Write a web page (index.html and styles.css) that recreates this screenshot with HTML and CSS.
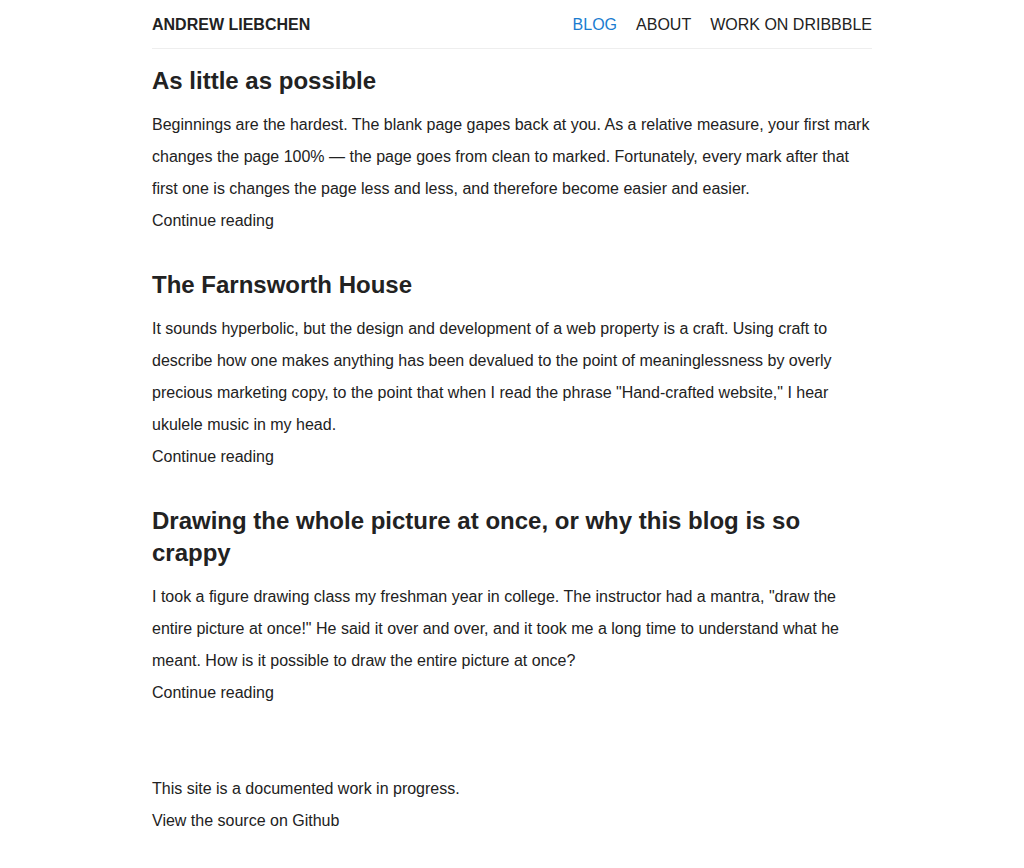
FILE: index.html
```html
<!DOCTYPE html>
<html lang="en">
<head>
<meta charset="utf-8">
<title>Andrew Liebchen</title>
<link rel="stylesheet" href="styles.css">
</head>
<body>
<div class="wrap">
  <header class="site-header">
    <a class="site-title" href="#">ANDREW LIEBCHEN</a>
    <nav class="nav">
      <a class="nav-link active" href="#">BLOG</a>
      <a class="nav-link" href="#">ABOUT</a>
      <a class="nav-link" href="#">WORK ON DRIBBBLE</a>
    </nav>
  </header>
  <main class="posts">
    <article class="post">
      <h1 class="post-title">As little as possible</h1>
      <p class="post-excerpt">Beginnings are the hardest. The blank page gapes back at you. As a relative measure, your first mark changes the page 100% — the page goes from clean to marked. Fortunately, every mark after that first one is changes the page less and less, and therefore become easier and easier.</p>
      <a class="more" href="#">Continue reading</a>
    </article>
    <article class="post">
      <h1 class="post-title">The Farnsworth House</h1>
      <p class="post-excerpt">It sounds hyperbolic, but the design and development of a web property is a craft. Using craft to describe how one makes anything has been devalued to the point of meaninglessness by overly precious marketing copy, to the point that when I read the phrase "Hand-crafted website," I hear ukulele music in my head.</p>
      <a class="more" href="#">Continue reading</a>
    </article>
    <article class="post">
      <h1 class="post-title">Drawing the whole picture at once, or why this blog is so crappy</h1>
      <p class="post-excerpt">I took a figure drawing class my freshman year in college. The instructor had a mantra, "draw the entire picture at once!" He said it over and over, and it took me a long time to understand what he meant. How is it possible to draw the entire picture at once?</p>
      <a class="more" href="#">Continue reading</a>
    </article>
  </main>
  <footer class="site-footer">
    <p class="foot-line">This site is a documented work in progress.</p>
    <p class="foot-line"><a class="foot-link" href="#">View the source on Github</a></p>
  </footer>
</div>
</body>
</html>
```
FILE: styles.css
```css
html, body {
  margin: 0;
  padding: 0;
  background: #fff;
}
body {
  font-family: "Liberation Sans", Arial, Helvetica, sans-serif;
  font-size: 16px;
  line-height: 32px;
  color: #222;
}
a {
  color: #222;
  text-decoration: none;
}
.wrap {
  width: 720px;
  margin: 0 auto;
}
.site-header {
  box-sizing: border-box;
  display: flex;
  justify-content: space-between;
  align-items: center;
  height: 49px;
  padding-top: 2px;
  border-bottom: 1px solid #eee;
}
.site-title {
  font-weight: bold;
  font-size: 16px;
}
.nav {
  display: flex;
  gap: 19px;
}
.nav-link.active {
  color: #1a7cd0;
}
.posts {
  padding-top: 16px;
}
.post {
  margin-bottom: 32px;
}
.post-title {
  font-size: 24px;
  line-height: 32px;
  font-weight: bold;
  margin: 0 0 12px;
}
.post-excerpt {
  margin: 0;
}
.more {
  display: block;
}
.site-footer {
  padding-top: 32px;
  padding-bottom: 32px;
}
.foot-line {
  margin: 0;
}
```
